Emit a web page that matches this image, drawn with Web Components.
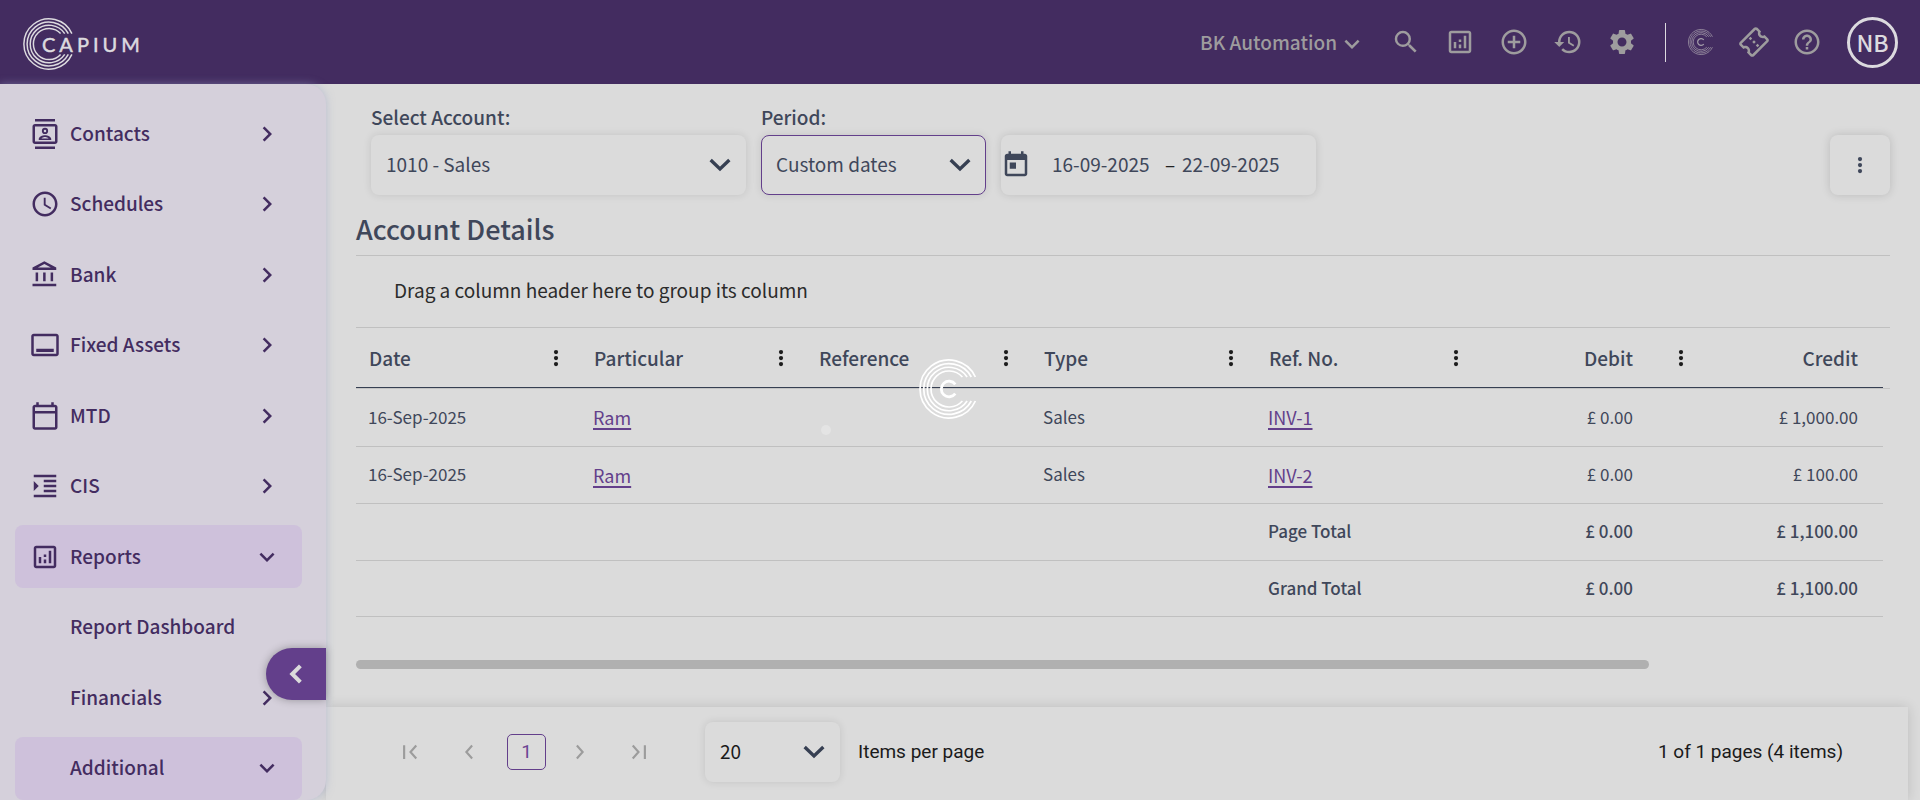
<!DOCTYPE html>
<html lang="en">
<head>
<meta charset="utf-8">
<title>Capium - Account Details</title>
<style>
  html, body { margin: 0; background: #dbdbdb; }
  body { font-family: "Noto Sans CJK JP", "Noto Sans", sans-serif; font-size: 19px; line-height: 28px; color: #3f475a; }
</style>
</head>
<body>
<app-shell></app-shell>
<script>
const ICONS = {
  search: '<path d="M15.5 14h-.79l-.28-.27A6.471 6.471 0 0 0 16 9.5 6.5 6.5 0 1 0 9.5 16c1.61 0 3.09-.59 4.23-1.57l.27.28v.79l5 4.99L20.49 19l-4.99-5zm-6 0C7.01 14 5 11.99 5 9.5S7.01 5 9.5 5 14 7.01 14 9.5 11.99 14 9.5 14z"/>',
  report: '<path d="M19 3H5c-1.1 0-2 .9-2 2v14c0 1.1.9 2 2 2h14c1.1 0 2-.9 2-2V5c0-1.1-.9-2-2-2zm0 16H5V5h14v14zM7 12h2v5H7zm8-5h2v10h-2zm-4 7h2v3h-2zm0-4h2v2h-2z"/>',
  add: '<path d="M13 7h-2v4H7v2h4v4h2v-4h4v-2h-4V7zm-1-5C6.48 2 2 6.48 2 12s4.48 10 10 10 10-4.48 10-10S17.52 2 12 2zm0 18c-4.41 0-8-3.59-8-8s3.59-8 8-8 8 3.59 8 8-3.59 8-8 8z"/>',
  history: '<path d="M13 3a9 9 0 0 0-9 9H1l3.89 3.89.07.14L9 12H6c0-3.87 3.13-7 7-7s7 3.13 7 7-3.13 7-7 7c-1.93 0-3.68-.79-4.94-2.06l-1.42 1.42A8.954 8.954 0 0 0 13 21a9 9 0 0 0 0-18zm-1 5v5l4.28 2.54.72-1.21-3.5-2.08V8H12z"/>',
  settings: '<path d="M19.14 12.94c.04-.3.06-.61.06-.94 0-.32-.02-.64-.07-.94l2.03-1.58a.49.49 0 0 0 .12-.61l-1.92-3.32a.488.488 0 0 0-.59-.22l-2.39.96c-.5-.38-1.03-.7-1.62-.94l-.36-2.54a.484.484 0 0 0-.48-.41h-3.84c-.24 0-.43.17-.47.41l-.36 2.54c-.59.24-1.13.57-1.62.94l-2.39-.96c-.22-.08-.47 0-.59.22L2.74 8.87c-.12.21-.08.47.12.61l2.03 1.58c-.05.3-.09.63-.09.94s.02.64.07.94l-2.03 1.58a.49.49 0 0 0-.12.61l1.92 3.32c.12.22.37.29.59.22l2.39-.96c.5.38 1.03.7 1.62.94l.36 2.54c.05.24.24.41.48.41h3.84c.24 0 .44-.17.47-.41l.36-2.54c.59-.24 1.13-.56 1.62-.94l2.39.96c.22.08.47 0 .59-.22l1.92-3.32c.12-.22.07-.47-.12-.61l-2.01-1.58zM12 15.6c-1.98 0-3.6-1.62-3.6-3.6s1.62-3.6 3.6-3.6 3.6 1.62 3.6 3.6-1.62 3.6-3.6 3.6z"/>',
  ticket: '<path transform="rotate(-45 12 12)" d="M22 10V6c0-1.11-.9-2-2-2H4c-1.1 0-1.99.89-1.99 2v4c1.1 0 1.99.9 1.99 2s-.89 2-2 2v4c0 1.1.9 2 2 2h16c1.1 0 2-.9 2-2v-4c-1.1 0-2-.9-2-2s.9-2 2-2zm-2-1.46c-1.19.69-2 1.99-2 3.46s.81 2.77 2 3.46V18H4v-2.54c1.19-.69 2-1.99 2-3.46 0-1.48-.8-2.77-1.99-3.46L4 6h16v2.54zM11 15h2v2h-2zm0-4h2v2h-2zm0-4h2v2h-2z"/>',
  help: '<path d="M11 18h2v-2h-2v2zm1-16C6.48 2 2 6.48 2 12s4.48 10 10 10 10-4.48 10-10S17.52 2 12 2zm0 18c-4.41 0-8-3.59-8-8s3.59-8 8-8 8 3.59 8 8-3.59 8-8 8zm0-14c-2.21 0-4 1.79-4 4h2c0-1.1.9-2 2-2s2 .9 2 2c0 2-3 1.75-3 5h2c0-2.25 3-2.5 3-5 0-2.21-1.79-4-4-4z"/>',
  contacts: '<path d="M4 0h16v2H4zM4 22h16v2H4z"/><path d="M20 4H4c-1.1 0-2 .9-2 2v12c0 1.1.9 2 2 2h16c1.1 0 2-.9 2-2V6c0-1.1-.9-2-2-2zm0 14H4V6h16v12z"/><path fill-rule="evenodd" d="M12 7a2.5 2.5 0 1 0 0 5 2.5 2.5 0 0 0 0-5zm0 1.5a1 1 0 1 1 0 2 1 1 0 0 1 0-2zM7 16.8v-.8c0-2 3-3.1 5-3.1s5 1.1 5 3.1v.8zm2.2-1.3h5.6c-.6-.6-1.8-1.1-2.8-1.1s-2.2.5-2.8 1.1z"/>',
  clock: '<path d="M11.99 2C6.47 2 2 6.48 2 12s4.47 10 9.99 10C17.52 22 22 17.52 22 12S17.52 2 11.99 2zM12 20c-4.42 0-8-3.58-8-8s3.58-8 8-8 8 3.58 8 8-3.58 8-8 8zm.5-13H11v6l5.25 3.15.75-1.23-4.5-2.67z"/>',
  bank: '<path d="M6.5 10h-2v7h2v-7zm6 0h-2v7h2v-7zm8.5 9H2v2h19v-2zm-2.5-9h-2v7h2v-7zm-7-6.74L16.71 6H6.29l5.21-2.74m0-2.26L2 6v2h19V6l-9.5-5z"/>',
  assets: '<path d="M21 3H3c-1.1 0-2 .9-2 2v14c0 1.1.9 2 2 2h18c1.1 0 2-.9 2-2V5c0-1.1-.9-2-2-2zm0 16H3V5h18v14zM5 15h14v2.5H5z"/>',
  calendar: '<path d="M20 3h-1V1h-2v2H7V1H5v2H4c-1.1 0-2 .9-2 2v16c0 1.1.9 2 2 2h16c1.1 0 2-.9 2-2V5c0-1.1-.9-2-2-2zm0 18H4V10h16v11zm0-13H4V5h16v3z"/>',
  indent: '<path d="M3 21h18v-2H3v2zM3 8v8l4-4-4-4zm8 9h10v-2H11v2zM3 3v2h18V3H3zm8 6h10V7H11v2zm0 4h10v-2H11v2z"/>',
  right: '<path d="M10 6 8.59 7.41 13.17 12l-4.58 4.59L10 18l6-6z"/>',
  down: '<path d="M16.59 8.59 12 13.17 7.41 8.59 6 10l6 6 6-6z"/>',
  today: '<path d="M19 3h-1V1h-2v2H8V1H6v2H5c-1.11 0-1.99.9-1.99 2L3 19c0 1.1.89 2 2 2h14c1.1 0 2-.9 2-2V5c0-1.1-.9-2-2-2zm0 16H5V8h14v11zM7 10h5v5H7z"/>',
  caret: '<path d="M5 8.2 12 15l7-6.8" fill="none" stroke="currentColor" stroke-width="2.5"/>',
  dots: '<circle cx="12" cy="7.2" r="1.7"/><circle cx="12" cy="12" r="1.7"/><circle cx="12" cy="16.8" r="1.7"/>',
  back: '<path d="M15.500 5.500 9 12l6.500 6.500" fill="none" stroke="currentColor" stroke-width="3.200"/>',
  first: '<path d="M7.3 6.5v11M17 6.800 12.400 12l4.600 5.200" fill="none" stroke="currentColor" stroke-width="1.700"/>',
  prev: '<path d="M14.500 6.800 9.900 12l4.600 5.200" fill="none" stroke="currentColor" stroke-width="1.700"/>',
  next: '<path d="M9.500 6.800 14.100 12l-4.600 5.200" fill="none" stroke="currentColor" stroke-width="1.700"/>',
  last: '<path d="M16.700 6.500v11M7 6.800 11.600 12 7 17.200" fill="none" stroke="currentColor" stroke-width="1.700"/>'
};

/* Registers an element whose shadow root is cloned from one template. */
function define(name, css, html, setup) {
  const tpl = document.createElement('template');
  tpl.innerHTML = `<style>*{box-sizing:border-box}button,select,input{font:inherit;color:inherit;letter-spacing:inherit}
    button{border:0;background:none;padding:0;display:grid;place-items:center;cursor:pointer}${css}</style>${html}`;
  customElements.define(name, class extends HTMLElement {
    connectedCallback() {
      if (this.shadowRoot) return;
      const root = this.attachShadow({ mode: 'open' });
      root.append(tpl.content.cloneNode(true));
      if (setup) setup(this, root);
    }
  });
}

define('app-icon', `:host{display:block;width:30px;height:30px;flex:none}svg{display:block;width:100%;height:100%;fill:currentColor}`,
  `<svg viewBox="0 0 24 24" aria-hidden="true"></svg>`,
  (host, root) => { root.querySelector('svg').innerHTML = ICONS[host.getAttribute('name')]; });

/* Four open rings; the "letter" attribute adds the small C in the middle. */
define('brand-rings', `:host{display:block;width:60px;height:60px;flex:none}svg{display:block;width:100%;height:100%;overflow:visible}
  :host(:not([letter])) .c{display:none}`,
  `<svg viewBox="-30 -30 60 60" fill="none" stroke="currentColor" stroke-width="1.700" aria-hidden="true">
    <path d="M26.400-12a29 29 0 1 0 0 24M22.300-12a25.300 25.300 0 1 0 0 24M18.100-12a21.700 21.700 0 1 0 0 24M13.400-12a18 18 0 1 0 0 24"/>
    <path class="c" stroke-width="2.800" d="M6.300-4.700a7.800 7.800 0 1 0 0 9.400"/></svg>`);

define('app-header', `:host{display:flex;align-items:center;height:84px;padding:0 22px 0 23px;background:#432c60;color:#9e9c9e}
  .logo{display:flex;align-items:center;color:#dcdadf;text-decoration:none}
  .logo brand-rings{width:52px;height:52px;margin-top:4px}
  .word{font:400 20px/28px Lato,sans-serif;letter-spacing:4px;margin:4px 0 0 -33px;-webkit-text-stroke:0.5px currentColor}
  .tools,.extra{display:flex;align-items:center}
  .tools{margin-left:auto;gap:24px}.extra{gap:23px;margin-left:20px}
  .org{display:flex;align-items:center;font-weight:500}
  .org app-icon{margin-top:4px}
  .rule{width:1px;height:39px;background:#dcdadf;margin-left:28px}
  .extra brand-rings{width:26px;height:26px;color:#a39ca9}
  .mark{width:30px;height:30px}
  .me{width:51px;height:51px;border:3px solid #dcdadf;border-radius:50%;color:#dcdadf;font-size:23px;font-weight:500;line-height:28px;margin-left:2px}`,
  `<a class="logo" href="#" aria-label="Capium"><brand-rings></brand-rings><span class="word">CAPIUM</span></a>
   <div class="tools">
    <button class="org"><span>BK Automation</span><app-icon name="down"></app-icon></button>
    <button aria-label="Search"><app-icon name="search"></app-icon></button>
    <button aria-label="Reports"><app-icon name="report"></app-icon></button>
    <button aria-label="Add"><app-icon name="add"></app-icon></button>
    <button aria-label="History"><app-icon name="history"></app-icon></button>
    <button aria-label="Settings"><app-icon name="settings"></app-icon></button>
   </div>
   <div class="rule"></div>
   <div class="extra">
    <button class="mark" aria-label="Capium hub"><brand-rings letter></brand-rings></button>
    <button aria-label="Tickets"><app-icon name="ticket"></app-icon></button>
    <button aria-label="Help"><app-icon name="help"></app-icon></button>
    <button class="me">NB</button>
   </div>`);

define('nav-item', `:host{display:block}
  a{display:flex;align-items:center;height:63px;padding:0 20px 0 15px;border-radius:8px;color:#432c60;font-weight:500;text-decoration:none}
  :host([active]) a{background:#cec1db}
  .lead{width:30px;height:30px;margin-right:10px;flex:none}.text{padding-bottom:2px}.end{margin-left:auto}`,
  `<a href="#"><span class="lead"></span><span class="text"><slot></slot></span></a>`,
  (host, root) => {
    const icon = host.getAttribute('icon'), arrow = host.getAttribute('arrow');
    if (icon) root.querySelector('.lead').innerHTML = `<app-icon name="${icon}"></app-icon>`;
    if (arrow) root.querySelector('a').insertAdjacentHTML('beforeend', `<app-icon class="end" name="${arrow}"></app-icon>`);
  });

define('side-nav', `:host{display:block;position:relative;z-index:1;background:#d5d0db;border-radius:0 20px 20px 0;box-shadow:0 0 8px rgba(150,160,200,.5)}
  nav{height:100%;padding:18px 24px 0 15px;display:flex;flex-direction:column;justify-content:space-between;gap:7px}
  button{position:absolute;right:0;bottom:100px;width:60px;height:52px;border-radius:26px 0 0 26px;background:#633f8b;color:#dbdbdb;box-shadow:0 0 8px rgba(0,0,0,.3)}`,
  `<nav aria-label="Main">
    <nav-item icon="contacts" arrow="right">Contacts</nav-item>
    <nav-item icon="clock" arrow="right">Schedules</nav-item>
    <nav-item icon="bank" arrow="right">Bank</nav-item>
    <nav-item icon="assets" arrow="right">Fixed Assets</nav-item>
    <nav-item icon="calendar" arrow="right">MTD</nav-item>
    <nav-item icon="indent" arrow="right">CIS</nav-item>
    <nav-item icon="report" arrow="down" active>Reports</nav-item>
    <nav-item>Report Dashboard</nav-item>
    <nav-item arrow="right">Financials</nav-item>
    <nav-item arrow="down" active>Additional</nav-item>
   </nav>
   <button aria-label="Collapse menu"><app-icon name="back"></app-icon></button>`);

define('select-field', `:host{display:block}
  label{display:block;height:31px;line-height:26px;font-weight:500}
  .box{display:grid;align-items:center;height:60px;border-radius:8px;background:#dbdbdb;box-shadow:0 0 9px rgba(0,0,0,.11);border:1px solid transparent}
  :host([focused]) .box{border-color:#633f8b}
  select{grid-area:1/1;width:100%;height:100%;appearance:none;border:0;background:none;padding:0 50px 2px 14px;outline:0}
  app-icon{grid-area:1/1;justify-self:end;margin-right:9px;pointer-events:none;width:32px;height:32px;color:#363f52}
  label:empty{display:none}`,
  `<label for="s"></label><div class="box"><select id="s"><option></option></select><app-icon name="caret"></app-icon></div>`,
  (host, root) => {
    root.querySelector('label').textContent = host.getAttribute('label') || '';
    root.querySelector('option').textContent = host.getAttribute('value');
    if (!host.hasAttribute('label')) root.querySelector('select').setAttribute('aria-label', 'Page size');
  });

define('date-range', `:host{display:flex;align-items:center;height:60px;border-radius:8px;background:#dbdbdb;box-shadow:0 0 9px rgba(0,0,0,.13)}
  input{border:0;background:none;outline:0;padding:0 0 2px;width:113px}
  app-icon{margin-right:21px}span{width:17px;padding-bottom:2px;color:#222}`,
  `<app-icon name="today"></app-icon><input aria-label="From" value="16-09-2025"><span>–</span><input aria-label="To" value="22-09-2025">`);

define('filter-bar', `:host{display:flex;align-items:flex-end;gap:15px;padding:20px 0 0 15px}
  .account{flex:0 1 375px}.period{flex:0 1 225px}date-range{flex:0 1 315px}
  .more{margin-left:auto;width:60px;height:60px;border-radius:8px;box-shadow:0 0 10px rgba(0,0,0,.15)}`,
  `<select-field class="account" label="Select Account:" value="1010 - Sales"></select-field>
   <select-field class="period" label="Period:" value="Custom dates" focused></select-field>
   <date-range></date-range>
   <button class="more" aria-label="More actions"><app-icon name="dots"></app-icon></button>`);

define('ledger-grid', `:host{display:block}
  .group{padding:20px 38px 23px;border-bottom:1px solid #c0c0c0;color:#2b2b2b}
  .frame{display:grid;grid-template-columns:1fr 7px}
  .gutter{height:61px;border-bottom:1px solid #c4c4c4}
  .view{overflow:hidden}
  table{width:calc(100% + 48px);min-width:1100px;table-layout:fixed;border-collapse:separate;border-spacing:0;font-size:17px;line-height:24px}
  th{height:60px;padding:0 10px 0 13px;border-bottom:1px solid #363f52;font-weight:500;font-size:19px;line-height:28px;text-align:left}
  .h{display:flex;align-items:center;justify-content:space-between}
  .h app-icon{color:#1c1c1c}
  .num .h{justify-content:flex-end;gap:33px}
  td{height:57px;padding:0 12px 2px;border-bottom:1px solid #c0c0c0}
  td:has(a){padding-bottom:0}
  tbody tr:first-child td{height:59px;border-top:1px solid #c4c4c4}
  tbody tr:last-child td{height:56px}
  td.num{text-align:right;padding-right:73px}
  tr.total td{font-weight:500}
  a{color:#633f8b;font-size:18px;text-decoration:underline 2px;text-underline-offset:3px}
  .thumb{width:calc(100% - 241px);height:9px;margin:43px 0 38px;border-radius:5px;background:#b0b0b0}`,
  `<div class="group">Drag a column header here to group its column</div>
   <div class="frame"><div class="view"><table><thead><tr></tr></thead><tbody></tbody></table></div><div class="gutter"></div></div>
   <div class="thumb"></div>`,
  (host, root) => {
    const heads = ['Date', 'Particular', 'Reference', 'Type', 'Ref. No.', 'Debit', 'Credit'];
    root.querySelector('thead tr').innerHTML = heads.map((h, i) =>
      `<th scope="col" class="${i > 4 ? 'num' : ''}"><div class="h"><span>${h}</span><button aria-label="${h} menu"><app-icon name="dots"></app-icon></button></div></th>`).join('');
    const link = t => `<a href="#">${t}</a>`;
    const rows = [
      ['16-Sep-2025', link('Ram'), '', 'Sales', link('INV-1'), '£ 0.00', '£ 1,000.00'],
      ['16-Sep-2025', link('Ram'), '', 'Sales', link('INV-2'), '£ 0.00', '£ 100.00'],
      ['', '', '', '', 'Page Total', '£ 0.00', '£ 1,100.00'],
      ['', '', '', '', 'Grand Total', '£ 0.00', '£ 1,100.00']];
    root.querySelector('tbody').innerHTML = rows.map((r, n) =>
      `<tr class="${n > 1 ? 'total' : ''}">${r.map((c, i) => `<td class="${i > 4 ? 'num' : ''}">${c}</td>`).join('')}</tr>`).join('');
  });

define('pager-bar', `:host{display:flex;align-items:center;box-sizing:border-box;min-height:93px;margin-right:12px;padding:0 65px 4px 69px;background:#dbdbdb;box-shadow:0 0 12px rgba(0,0,0,.14);color:#1a1a1a;font-family:Roboto,sans-serif}
  .pages{display:flex;align-items:center;gap:29px;color:#9c9c9c}
  .now{width:39px;height:36px;margin:0 -10px 0 -6px;border:1px solid #633f8b;border-radius:5px;color:#6b4694;font-size:19px}
  select-field{width:135px;margin:0 18px 0 51px;font-family:"Noto Sans CJK JP",sans-serif}
  .count{margin-left:auto}`,
  `<div class="pages">
     <button aria-label="First page"><app-icon name="first"></app-icon></button>
     <button aria-label="Previous page"><app-icon name="prev"></app-icon></button>
     <button class="now" aria-current="page">1</button>
     <button aria-label="Next page"><app-icon name="next"></app-icon></button>
     <button aria-label="Last page"><app-icon name="last"></app-icon></button>
   </div>
   <select-field value="20"></select-field><span>Items per page</span>
   <span class="count">1 of 1 pages (4 items)</span>`);

define('loading-mark', `:host{position:fixed;inset:0;z-index:5;pointer-events:none;color:#fff}
  brand-rings{position:absolute;left:calc(50% - 41px);top:calc(50% - 41px)}
  i{position:absolute;left:calc(50% - 139px);top:calc(50% + 25px);width:10px;height:10px;border-radius:50%;background:#e4e4e4}`,
  `<brand-rings letter></brand-rings><i></i>`);

define('app-shell', `:host{display:grid;grid-template:84px 1fr/326px minmax(0,1fr);min-height:100vh}
  app-header{grid-column:1/-1}
  main{display:flex;flex-direction:column}
  .body{padding:0 30px}
  h1{margin:0;padding:14px 0 7px;border-bottom:1px solid #c0c0c0;font-weight:500;font-size:27px;line-height:39px}
  pager-bar{flex:1}`,
  `<app-header></app-header><side-nav></side-nav>
   <main><div class="body"><filter-bar></filter-bar><h1>Account Details</h1><ledger-grid></ledger-grid></div><pager-bar></pager-bar></main>
   <loading-mark></loading-mark>`);
</script>
</body>
</html>
